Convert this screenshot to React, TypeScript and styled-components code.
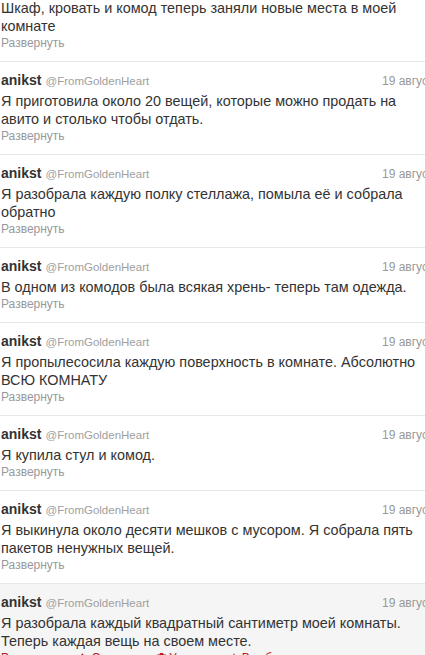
import React from "react";
import styled, { createGlobalStyle } from "styled-components";

const Global = createGlobalStyle`
  html, body { margin: 0; padding: 0; overflow: hidden; background: #fff; }
  body { font-family: "Liberation Sans", Arial, Helvetica, sans-serif; color: #333; }
`;

const Viewport = styled.div`
  width: 425px;
  height: 655px;
  overflow: hidden;
`;

const Stream = styled.div`
  width: 450px;
  margin-top: -31px;
  display: flex;
  flex-direction: column;
`;

const Tweet = styled.div<{ $active?: boolean }>`
  padding: 9px 10px 10px 1px;
  border-bottom: 1px solid #e8e8e8;
  background: ${(p) => (p.$active ? "#f5f5f5" : "#fff")};
  display: flex;
  flex-direction: column;
`;

const Header = styled.div`
  display: flex;
  align-items: baseline;
  height: 18px;
  line-height: 18px;
`;

const Name = styled.span`
  font-weight: bold;
  font-size: 14px;
  color: #333;
`;

const Handle = styled.span`
  font-size: 11.5px;
  color: #a0a0a0;
  margin-left: 4px;
`;

const Time = styled.span`
  margin-left: auto;
  font-size: 12px;
  color: #999;
`;

const Text = styled.p`
  margin: 3px 0 0;
  font-size: 14.4px;
  line-height: 18px;
  color: #333;
  width: 430px;
`;

const Expand = styled.div`
  font-size: 12px;
  line-height: 16px;
  color: #999;
`;

const Actions = styled.div`
  display: flex;
  gap: 14px;
  font-size: 12px;
  line-height: 16px;
  color: #c0181d;
`;

const Action = styled.span`
  display: inline-flex;
  align-items: center;
  gap: 3px;
`;

const tweets = [
  "Шкаф, кровать и комод теперь заняли новые места в моей комнате",
  "Я приготовила около 20 вещей, которые можно продать на авито и столько чтобы отдать.",
  "Я разобрала каждую полку стеллажа, помыла её и собрала обратно",
  "В одном из комодов была всякая хрень- теперь там одежда.",
  "Я пропылесосила каждую поверхность в комнате. Абсолютно ВСЮ КОМНАТУ",
  "Я купила стул и комод.",
  "Я выкинула около десяти мешков с мусором. Я собрала пять пакетов ненужных вещей.",
];

export default function App() {
  return (
    <Viewport>
      <Global />
      <Stream>
        {tweets.map((t, i) => (
          <Tweet key={i}>
            <Header>
              <Name>anikst</Name>
              <Handle>@FromGoldenHeart</Handle>
              <Time>19 августа</Time>
            </Header>
            <Text>{t}</Text>
            <Expand>Развернуть</Expand>
          </Tweet>
        ))}
        <Tweet $active>
          <Header>
            <Name>anikst</Name>
            <Handle>@FromGoldenHeart</Handle>
            <Time>19 августа</Time>
          </Header>
          <Text>Я разобрала каждый квадратный сантиметр моей комнаты. Теперь каждая вещь на своем месте.</Text>
          <Actions>
            <Action>Развернуть</Action>
            <Action>
              <svg width="10" height="10" viewBox="0 0 10 10"><path d="M4 1 L1 4 L4 7 M1 4 H7 Q9 4 9 6 V9" fill="none" stroke="currentColor" strokeWidth="1.6" /></svg>
              Ответить
            </Action>
            <Action>
              <svg width="9" height="10" viewBox="0 0 9 10"><path d="M0 2 H9 M3 2 V0.5 H6 V2 M1.5 3 H7.5 V10 H1.5 Z" fill="currentColor" stroke="currentColor" strokeWidth="1" /></svg>
              Удалить
            </Action>
            <Action>
              <svg width="10" height="10" viewBox="0 0 10 10"><path d="M5 0 L6.2 3.6 L10 3.7 L7 6 L8.1 9.7 L5 7.5 L1.9 9.7 L3 6 L0 3.7 L3.8 3.6 Z" fill="currentColor" /></svg>
              В избранное
            </Action>
          </Actions>
        </Tweet>
      </Stream>
    </Viewport>
  );
}
